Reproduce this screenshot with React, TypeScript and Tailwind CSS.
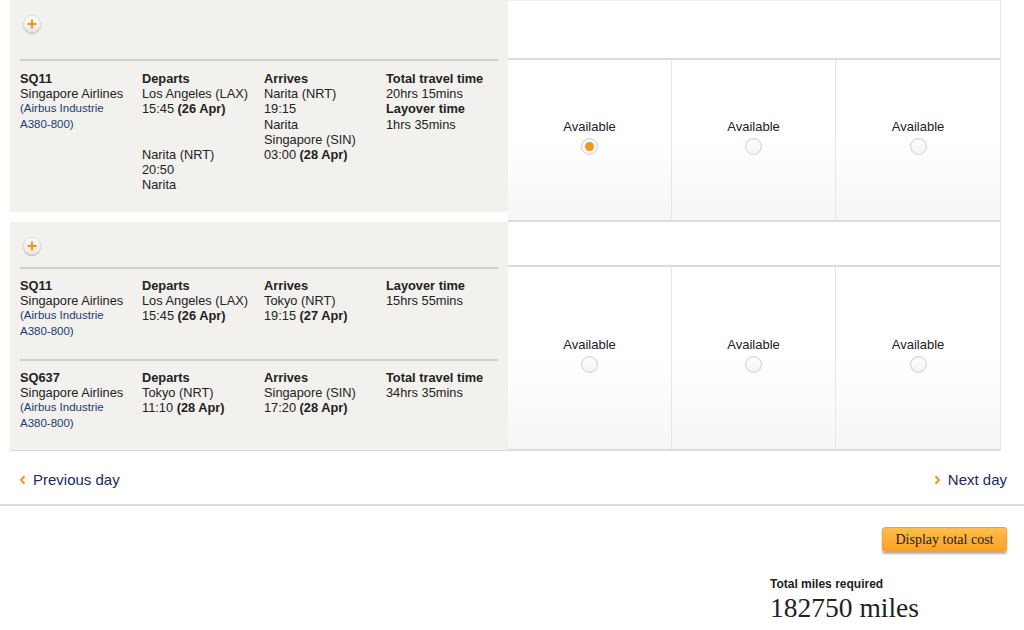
const aircraft = '(Airbus Industrie A380-800)';

function PlusIcon() {
    return (
        <div className="flex h-[18px] w-[18px] items-center justify-center rounded-full border border-[#dedad3] bg-gradient-to-b from-white to-[#ebe8e2] shadow-[0_1px_1px_rgba(0,0,0,0.25)]">
            <svg width="12" height="12" viewBox="0 0 12 12">
                <path d="M6 1.5v9M1.5 6h9" stroke="#f7941d" strokeWidth="2" />
            </svg>
        </div>
    );
}

function Radio({ checked }: { checked?: boolean }) {
    return (
        <span className="mt-[4px] flex h-[17px] w-[17px] items-center justify-center rounded-full border border-[#cfcfcf] bg-gradient-to-b from-white to-[#f3f3f3] shadow-[inset_0_1px_1px_rgba(0,0,0,0.06)]">
            {checked ? <span className="h-[9px] w-[9px] rounded-full bg-[#f7941d]" /> : null}
        </span>
    );
}

function Chevron({ left }: { left?: boolean }) {
    return (
        <svg width="7" height="10" viewBox="0 0 7 10">
            <path
                d={left ? 'M5.5 1.2L2 5l3.5 3.8' : 'M1.5 1.2L5 5 1.5 8.8'}
                fill="none"
                stroke="#f7941d"
                strokeWidth="2"
            />
        </svg>
    );
}

function Strong({ children }: { children: React.ReactNode }) {
    return <div className="font-bold">{children}</div>;
}

function Blank() {
    return <div className="h-[15px]" />;
}

function Aircraft() {
    return <div className="w-[105px] text-[11.5px] leading-[15.5px] text-[#1d3a70]">{aircraft}</div>;
}

function FlightRow({ code, cols }: { code: string; cols: React.ReactNode[] }) {
    return (
        <div className="grid grid-cols-[122px_122px_122px_1fr] px-[10px] text-[12.8px] leading-[15.2px] text-[#222]">
            <div>
                <Strong>{code}</Strong>
                <div>Singapore Airlines</div>
                <Aircraft />
            </div>
            {cols.map((c, i) => (
                <div key={i}>{c}</div>
            ))}
        </div>
    );
}

function FareCells({ selected }: { selected?: number }) {
    return (
        <div className="grid flex-1 grid-cols-3 border-b-2 border-[#dcdcdc]">
            {[0, 1, 2].map((i) => (
                <div
                    key={i}
                    className={
                        'flex flex-col items-center justify-center bg-gradient-to-b from-white from-50% to-[#f6f6f6] pb-[6px] text-[13px] text-[#222] ' +
                        (i < 2 ? 'border-r border-[#e6e6e6]' : '')
                    }
                >
                    <div className="leading-[15px]">Available</div>
                    <Radio checked={selected === i} />
                </div>
            ))}
        </div>
    );
}

export default function App() {
    return (
        <div className="h-[630px] w-[1024px] overflow-hidden bg-white font-['Liberation_Sans',Arial,sans-serif]">
            <div className="w-[1001px] pl-[10px]">
                {/* first itinerary */}
                <div className="flex h-[222px]">
                    <div className="flex h-[212px] w-[498px] flex-col rounded-b-[3px] bg-[#f2f1ee]">
                        <div className="h-[59px] pl-[13px] pt-[15px]">
                            <PlusIcon />
                        </div>
                        <div className="mx-[10px] border-t-2 border-[#d2d0cb]" />
                        <div className="pt-[10px]">
                            <FlightRow
                                code="SQ11"
                                cols={[
                                    <>
                                        <Strong>Departs</Strong>
                                        <div>Los Angeles (LAX)</div>
                                        <div>15:45 <b>(26 Apr)</b></div>
                                        <Blank />
                                        <Blank />
                                        <div>Narita (NRT)</div>
                                        <div>20:50</div>
                                        <div>Narita</div>
                                    </>,
                                    <>
                                        <Strong>Arrives</Strong>
                                        <div>Narita (NRT)</div>
                                        <div>19:15</div>
                                        <div>Narita</div>
                                        <div>Singapore (SIN)</div>
                                        <div>03:00 <b>(28 Apr)</b></div>
                                    </>,
                                    <>
                                        <Strong>Total travel time</Strong>
                                        <div>20hrs 15mins</div>
                                        <Strong>Layover time</Strong>
                                        <div>1hrs 35mins</div>
                                    </>,
                                ]}
                            />
                        </div>
                    </div>
                    <div className="flex flex-1 flex-col border-r border-[#e6e6e6]">
                        <div className="h-[60px] border-b-2 border-t border-[#dcdcdc] border-t-[#f0f0f0]" />
                        <FareCells selected={0} />
                    </div>
                </div>

                {/* second itinerary */}
                <div className="flex h-[229px]">
                    <div className="flex w-[498px] flex-col border-b border-[#dcdcdc] bg-[#f2f1ee]">
                        <div className="h-[45px] pl-[13px] pt-[15px]">
                            <PlusIcon />
                        </div>
                        <div className="mx-[10px] border-t-2 border-[#d2d0cb]" />
                        <div className="h-[90px] pt-[9px]">
                            <FlightRow
                                code="SQ11"
                                cols={[
                                    <>
                                        <Strong>Departs</Strong>
                                        <div>Los Angeles (LAX)</div>
                                        <div>15:45 <b>(26 Apr)</b></div>
                                    </>,
                                    <>
                                        <Strong>Arrives</Strong>
                                        <div>Tokyo (NRT)</div>
                                        <div>19:15 <b>(27 Apr)</b></div>
                                    </>,
                                    <>
                                        <Strong>Layover time</Strong>
                                        <div>15hrs 55mins</div>
                                    </>,
                                ]}
                            />
                        </div>
                        <div className="mx-[10px] border-t-2 border-[#d2d0cb]" />
                        <div className="pt-[9px]">
                            <FlightRow
                                code="SQ637"
                                cols={[
                                    <>
                                        <Strong>Departs</Strong>
                                        <div>Tokyo (NRT)</div>
                                        <div>11:10 <b>(28 Apr)</b></div>
                                    </>,
                                    <>
                                        <Strong>Arrives</Strong>
                                        <div>Singapore (SIN)</div>
                                        <div>17:20 <b>(28 Apr)</b></div>
                                    </>,
                                    <>
                                        <Strong>Total travel time</Strong>
                                        <div>34hrs 35mins</div>
                                    </>,
                                ]}
                            />
                        </div>
                    </div>
                    <div className="flex flex-1 flex-col border-r border-[#e6e6e6]">
                        <div className="h-[45px] border-b-2 border-[#dcdcdc]" />
                        <FareCells />
                    </div>
                </div>
            </div>

            {/* day navigation */}
            <div className="flex h-[55px] items-center justify-between border-b-2 border-[#dcdcdc] pl-[19px] pr-[17px] pt-[5px] text-[15px] text-[#1b2a5c]">
                <a className="flex items-center gap-[7px]">
                    <Chevron left />
                    Previous day
                </a>
                <a className="flex items-center gap-[7px]">
                    <Chevron />
                    Next day
                </a>
            </div>

            <div className="flex justify-end pr-[17px] pt-[21px]">
                <button className="h-[25px] w-[125px] rounded-[3px] border border-[#f0a23a] bg-gradient-to-b from-[#ffbd4a] to-[#f9a125] font-['Liberation_Serif',serif] text-[14px] text-[#222] shadow-[0_2px_2px_rgba(0,0,0,0.3)]">
                    Display total cost
                </button>
            </div>

            <div className="ml-[770px] pt-[25px]">
                <div className="text-[12px] font-bold leading-[15px] text-[#222]">Total miles required</div>
                <div className="font-['Liberation_Serif',serif] text-[27.5px] leading-[32px] text-[#222]">182750 miles</div>
            </div>
        </div>
    );
}
